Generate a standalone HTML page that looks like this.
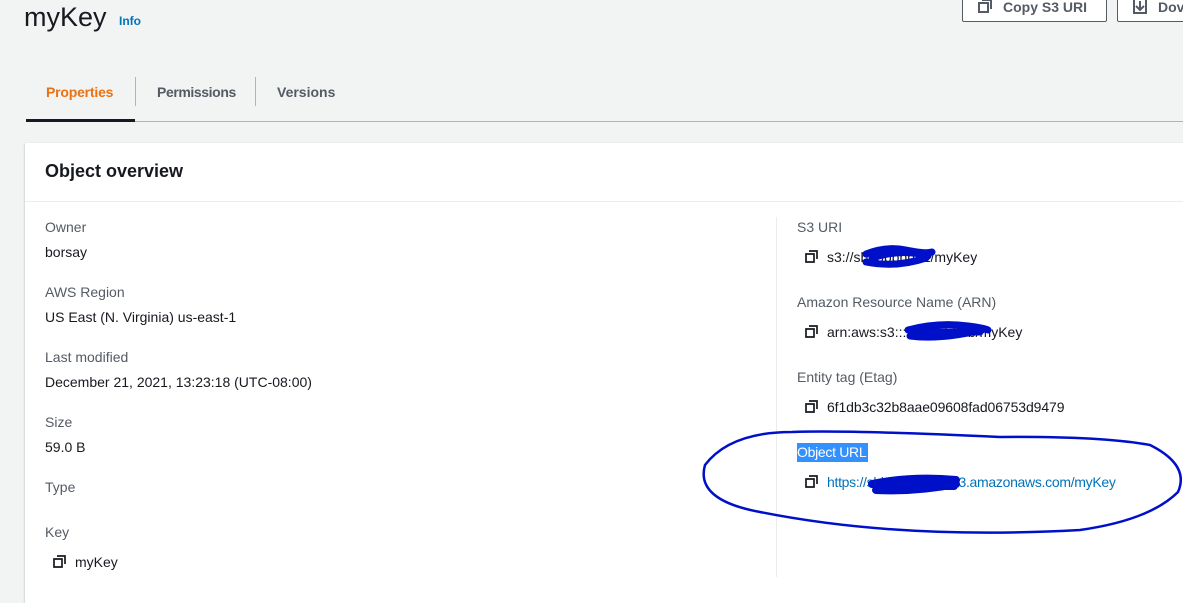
<!DOCTYPE html>
<html><head><style>
body{margin:0;width:1183px;height:590px;background:#f2f3f3;font-family:"Liberation Sans",sans-serif;position:relative;overflow:hidden;color:#16191f}
.a{position:absolute;white-space:nowrap}
.lab{font-size:14px;color:#545b64}
.val{font-size:14px;color:#16191f}
.btn{position:absolute;border:1px solid #545b64;border-radius:2px;background:#fff;font-weight:bold;color:#545b64;font-size:14px}
svg.ic{position:absolute}
</style></head><body>
<div class="a" style="left:24px;top:2px;font-size:27px;color:#16191f">myKey</div>
<div class="a" style="left:119px;top:14px;font-size:12px;font-weight:bold;color:#0073bb">Info</div>
<div class="btn" style="left:962px;top:-10px;width:143px;height:30px"></div>
<div class="a" style="left:1003px;top:-1px;font-size:14px;font-weight:bold;color:#545b64">Copy S3 URI</div>
<svg class="ic" style="left:978px;top:-1px" width="14" height="14" viewBox="0 0 14 14"><path d="M4 1h9v9M1 4h9v9H1z" fill="none" stroke="#545b64" stroke-width="2"/></svg>
<div class="btn" style="left:1117px;top:-10px;width:80px;height:30px"></div>
<div class="a" style="left:1158px;top:-1px;font-size:14px;font-weight:bold;color:#545b64">Dov</div>
<svg class="ic" style="left:1133px;top:-2px" width="14" height="16" viewBox="0 0 14 16"><path d="M1 0v15h12V0M7 3v9M3 8l4 4 4-4" fill="none" stroke="#545b64" stroke-width="2"/></svg>

<div class="a" style="left:46px;top:84px;font-size:14px;font-weight:bold;color:#ec7211;letter-spacing:-0.2px">Properties</div>
<div class="a" style="left:135px;top:77px;width:1px;height:29px;background:#aab7b8"></div>
<div class="a" style="left:157px;top:84px;font-size:14px;font-weight:bold;color:#545b64;letter-spacing:-0.4px">Permissions</div>
<div class="a" style="left:255px;top:77px;width:1px;height:29px;background:#aab7b8"></div>
<div class="a" style="left:277px;top:84px;font-size:14px;font-weight:bold;color:#545b64">Versions</div>
<div class="a" style="left:26px;top:121px;width:1157px;height:1px;background:#aab7b8"></div>
<div class="a" style="left:26px;top:119px;width:109px;height:3px;background:#16191f"></div>

<div class="a" style="left:25px;top:143px;width:1170px;height:460px;background:#fff;box-shadow:0 1px 2px rgba(0,28,36,.3)"></div>
<div class="a" style="left:25px;top:201px;width:1158px;height:1px;background:#eaeded"></div>
<div class="a" style="left:45px;top:161px;font-size:18px;font-weight:bold">Object overview</div>
<div class="a" style="left:776px;top:217px;width:1px;height:360px;background:#eaeded"></div>

<div class="a lab" style="left:45px;top:219px">Owner</div>
<div class="a val" style="left:45px;top:244px">borsay</div>
<div class="a lab" style="left:45px;top:284px">AWS Region</div>
<div class="a val" style="left:45px;top:309px">US East (N. Virginia) us-east-1</div>
<div class="a lab" style="left:45px;top:349px">Last modified</div>
<div class="a val" style="left:45px;top:374px">December 21, 2021, 13:23:18 (UTC-08:00)</div>
<div class="a lab" style="left:45px;top:414px">Size</div>
<div class="a val" style="left:45px;top:439px">59.0 B</div>
<div class="a lab" style="left:45px;top:479px">Type</div>
<div class="a lab" style="left:45px;top:524px">Key</div>
<div class="a val" style="left:75px;top:554px">myKey</div>
<svg class="ic" style="left:53px;top:555px" width="13" height="13" viewBox="0 0 13 13"><path d="M4 1h8v8M1 4h8v8H1z" fill="none" stroke="#16191f" stroke-width="1.7"/></svg>

<div class="a lab" style="left:797px;top:219px">S3 URI</div>
<div class="a val" style="left:827px;top:249px">s3://sbbbbbbbb1/myKey</div>
<div class="a lab" style="left:797px;top:294px">Amazon Resource Name (ARN)</div>
<div class="a val" style="left:827px;top:324px">arn:aws:s3:::sbbbbbbbb/myKey</div>
<div class="a lab" style="left:797px;top:369px">Entity tag (Etag)</div>
<div class="a val" style="left:827px;top:399px;letter-spacing:-0.1px">6f1db3c32b8aae09608fad06753d9479</div>
<div class="a" style="left:797px;top:443px;width:71px;height:19px;background:#3390ff"></div>
<div class="a lab" style="left:797px;top:444px;color:#fff;letter-spacing:-0.3px">Object URL</div>
<div class="a val" style="left:827px;top:474px;color:#0073bb;letter-spacing:-0.3px">https://sbbbbbbbbb1.s3.amazonaws.com/myKey</div>
<svg class="ic" style="left:805px;top:250px" width="13" height="13" viewBox="0 0 13 13"><path d="M4 1h8v8M1 4h8v8H1z" fill="none" stroke="#16191f" stroke-width="1.7"/></svg>
<svg class="ic" style="left:805px;top:325px" width="13" height="13" viewBox="0 0 13 13"><path d="M4 1h8v8M1 4h8v8H1z" fill="none" stroke="#16191f" stroke-width="1.7"/></svg>
<svg class="ic" style="left:805px;top:400px" width="13" height="13" viewBox="0 0 13 13"><path d="M4 1h8v8M1 4h8v8H1z" fill="none" stroke="#16191f" stroke-width="1.7"/></svg>
<svg class="ic" style="left:805px;top:475px" width="13" height="13" viewBox="0 0 13 13"><path d="M4 1h8v8M1 4h8v8H1z" fill="none" stroke="#16191f" stroke-width="1.7"/></svg>

<svg class="ic" style="left:0;top:0" width="1183" height="590" viewBox="0 0 1183 590">
<g fill="none" stroke="#0010c8" stroke-linecap="round">
<path d="M866 254q20-8 40-4t26 2M866 262q30 6 60-4M872 258q30-10 56-2" stroke-width="7"/>
<path d="M908 330q30-8 60-4 16 2 20 4M910 336q30 4 72-6M914 332h66" stroke-width="7"/>
<path d="M872 484q40-8 84-4M876 490q40 2 80-6M876 486h78" stroke-width="8"/>
<path d="M792 432Q730 432 705 465 695 500 760 512 900 540 1080 530 1150 520 1178 492 1190 465 1150 445 1100 436 1000 437 850 430 792 432z" stroke-width="2.5"/>
</g></svg>
</body></html>
